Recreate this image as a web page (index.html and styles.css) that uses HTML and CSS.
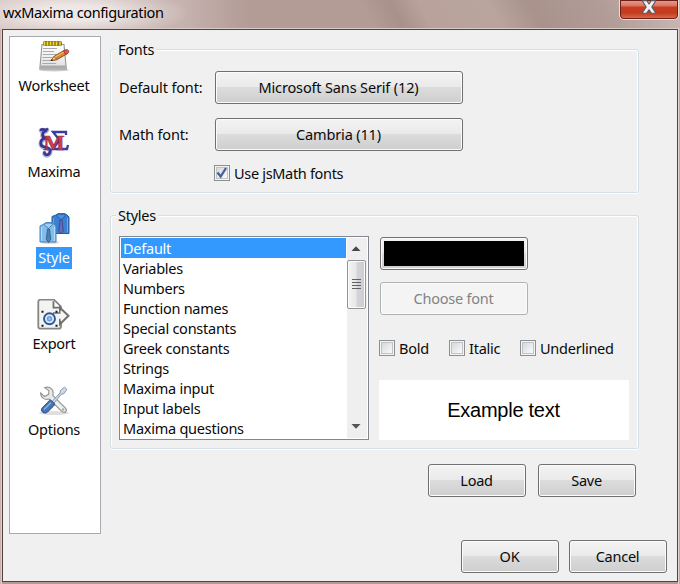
FILE: index.html
```html
<!DOCTYPE html>
<html lang="en">
<head>
<meta charset="utf-8">
<title>wxMaxima configuration</title>
<link rel="stylesheet" href="styles.css">
</head>
<body>
<div class="window">
  <header class="titlebar">
    <span class="title">wxMaxima configuration</span>
    <div class="close">
      <svg width="16" height="15" viewBox="0 0 16 15"><path d="M1.200 .7h4.600L8 4 10.200 .7h4.600L10.800 7 15 13.300h-4.600L8 9.800l-2.400 3.500H1L5.200 7z" fill="#eef0f2" stroke="#535666" stroke-width="1.100" stroke-linejoin="round"/></svg>
    </div>
  </header>
  <main class="client">
    <div class="panes">
      <nav class="sidebar">
        <div class="item">
          <svg width="32" height="32" viewBox="0 0 32 32">
            <defs><linearGradient id="paper" x2="0" y2="1"><stop offset="0" stop-color="#fff"/><stop offset="1" stop-color="#dedede"/></linearGradient></defs>
            <ellipse cx="16" cy="29" rx="15" ry="1.500" fill="#000" opacity=".2"/>
            <path d="M4 3.500h22l2.300 24.500H1.800z" fill="url(#paper)" stroke="#969696" stroke-width="1.100"/>
            <path d="M2.200 24.500h25.500v3H2z" fill="#aaa"/>
            <path d="M5 7.500h14M5 10.500h11M4.800 13.500h14M4.600 16.500h10M4.400 19.500h11M4.200 22.500h14" stroke="#aaa" stroke-width="1"/>
            <rect x="5" y="0" width="19" height="5" rx="1.500" fill="#8a7a12"/>
            <path d="M6.500 .5v4M9.500 .5v4M12.500 .5v4M15.500 .5v4M18.500 .5v4M22 .5v4" stroke="#f2d833" stroke-width="1.500"/>
            <g transform="translate(0 -.5)">
              <path d="M13 20l3.500-4.500 10.500-6 2.500 3.500-10.800 6.300z" fill="#db842b" stroke="#7e4812" stroke-width=".9"/>
              <path d="M17 16.500l9-5" stroke="#f7b965" stroke-width="1.200"/>
              <path d="M13 20l3-4 2.600 2.900z" fill="#f1cf9d" stroke="#7e4812" stroke-width=".6"/>
              <path d="M25.500 10.300l2.500-1.100c2.500-.6 3.700 2.400 1.800 3.600l-2.200 1.200z" fill="#d75d52" stroke="#8c3630" stroke-width=".8"/>
              <path d="M12.700 20.400l1.400-1.800.8 1.300z" fill="#222"/>
            </g>
          </svg>
          <span class="label">Worksheet</span>
        </div>
        <div class="item">
          <svg width="32" height="32" viewBox="0 0 32 32">
            <g fill="none">
              <path d="M3 3.500c2-1.500 3.500 1 6-.5M8 4.500C4 5.500 3 10.500 7.500 12 2 12.500 1 19.500 6 20.500c5 .6 7.500 3 5.500 6.500-2 2.500-5.500 1.500-5-.8" stroke="#b9b8ca" stroke-width="4.600" stroke-linecap="round"/>
              <path d="M3 2.800c2-1.500 3.500 1 6-.5M8 3.800C4 4.800 3 9.800 7.500 11.300 2 11.800 1 18.800 6 19.800c5 .6 7.500 3 5.500 6.500-2 2.500-5.500 1.500-5-.8" stroke="#35359c" stroke-width="2.700" stroke-linecap="round"/>
              <path d="M28 8V5H15l6.500 8-6.500 9h14l1-4" stroke="#3b3ba4" stroke-width="2.300"/>
            </g>
            <text x="5.500" y="22.500" class="mark" textLength="21" lengthAdjust="spacingAndGlyphs">M</text>
          </svg>
          <span class="label">Maxima</span>
        </div>
        <div class="item selected">
          <svg width="32" height="32" viewBox="0 0 32 32">
            <path d="M14 3.500l4-1.500 2-1.300h7L29 2l2 2v16.500H14z" fill="#3b7fd0" stroke="#225ba4"/>
            <path d="M15.500 5v14.500M29.500 5v14.500" stroke="#69a8e8"/>
            <path d="M18.500 2.700l4.500 4 4.500-4-1.800-1.500h-5.400z" fill="#4e90dc" stroke="#1e549a" stroke-width=".8"/>
            <path d="M22 7h2l1.200 11-2.200 2.700-2.200-2.700z" fill="#6b6ab5" stroke="#31458d" stroke-width=".8"/>
            <ellipse cx="12" cy="29.500" rx="9" ry="1.300" fill="#000" opacity=".18"/>
            <path d="M2 13l4-2 2-1.300h6L16 11l2 2v16H2z" fill="#83bdec" stroke="#4382bd"/>
            <path d="M3.500 14v14M16.500 14v14" stroke="#b5dcf8"/>
            <path d="M6 11.500l4.500 4 4.200-4-1.700-1.400H7.800z" fill="#9fceF4" stroke="#3973aa" stroke-width=".8"/>
            <path d="M9.500 16h2l1.200 10.500-2.200 3-2.200-3z" fill="#4d84b5" stroke="#28587f" stroke-width=".8"/>
          </svg>
          <span class="label">Style</span>
        </div>
        <div class="item">
          <svg width="34" height="32" viewBox="0 0 34 32">
            <g transform="translate(0 -.8)">
              <path d="M3.500 1.500H17l7 7v19.800c0 1.500-.7 2.200-2.200 2.200H3.500c-1.500 0-2.200-.7-2.200-2.200V3.700c0-1.500.7-2.200 2.200-2.200z" fill="#f3f3f1" stroke="#858783" stroke-width="1.800"/>
              <path d="M16.500 3v6.500h7" fill="#fff" stroke="#6e706c" stroke-width="1.800"/>
              <path d="M16 15h7V9.500l8.500 8L23 26v-5.500" fill="#f3f3f1" stroke="#6e706c" stroke-width="2"/>
              <path d="M17 15.500h6.500v-3.300l5.500 5.300-5.500 5v-3H17z" fill="#f4f4f2"/>
              <circle cx="12.500" cy="20.500" r="5.500" fill="#dbe9f7" stroke="#2c569c" stroke-width="1.900"/>
              <circle cx="12.500" cy="20.500" r="2.700" fill="#6f9dd2"/><circle cx="12.500" cy="20.500" r="1.200" fill="#a6c7e9"/>
              <path d="M4.500 12.500h2v2h-2zM18.500 12.500h2v2h-2zM4.500 26.500h2v2h-2zM18.500 26.500h2v2h-2z" fill="#151515"/>
            </g>
          </svg>
          <span class="label">Export</span>
        </div>
        <div class="item">
          <svg width="32" height="32" viewBox="0 0 32 32">
            <ellipse cx="16" cy="28" rx="15" ry="2" fill="#000" opacity=".13"/>
            <path d="M6.500 2.700c4-1.500 8.700.5 8.700 5.300 0 1 0 1.700-.4 2.500l12.500 12.400c2.700 2.900-.7 6.200-3.500 3.500L11.200 14c-4.500 1.400-8.500-1-8.600-6l4 3.500 4-2.200.3-3.700z" fill="#e8e9e7" stroke="#92958f" stroke-width="1.100"/>
            <path d="M14 13.500l10.500 11" stroke="#fff"/>
            <circle cx="25" cy="24.500" r="1.200" fill="#aaa"/>
            <path d="M14 16.500l8-8.500.4-2.400 4.100-3.400 2.400 2.200-3.100 4.300-2.400.5-7.400 8.900z" fill="#d1d9e3" stroke="#8697ad"/>
            <path d="M12.500 15l4 3.700c.2 1.600-.8 2.300-1.900 3.200l-5 5.100c-2.800 3-8.200-1-5.400-4.100l5.200-5.200c1-1.200 1.500-2.400 3.100-2.700z" fill="#4674b5" stroke="#234c85"/>
            <path d="M13 17.500l-7 7" stroke="#8eb2df" stroke-width="1.500"/>
          </svg>
          <span class="label">Options</span>
        </div>
      </nav>
      <div class="content">
        <section class="group fonts">
          <h2 class="legend">Fonts</h2>
          <div class="row"><span class="field">Default font:</span><div class="btn wide">Microsoft Sans Serif (12)</div></div>
          <div class="row"><span class="field">Math font:</span><div class="btn wide">Cambria (11)</div></div>
          <div class="check js"><span class="box"><svg width="12" height="12" viewBox="0 0 12 12"><path d="M1.500 5.500l3.200 4L10 1" fill="none" stroke="#4a5f97" stroke-width="2.300"/></svg></span>Use jsMath fonts</div>
        </section>
        <section class="group styles">
          <h2 class="legend">Styles</h2>
          <div class="list">
            <ul class="options">
              <li class="active">Default</li><li>Variables</li><li>Numbers</li><li>Function names</li><li>Special constants</li><li>Greek constants</li><li>Strings</li><li>Maxima input</li><li>Input labels</li><li>Maxima questions</li>
            </ul>
            <div class="scroll">
              <svg class="arrow" width="10" height="5" viewBox="0 0 10 5"><path d="M.5 5L5 .3 9.500 5z" fill="#484848"/></svg>
              <div class="thumb"><i></i><i></i><i></i><i></i></div>
              <svg class="arrow down" width="10" height="5" viewBox="0 0 10 5"><path d="M.5 0L5 4.700 9.500 0z" fill="#555"/></svg>
            </div>
          </div>
          <div class="settings">
            <div class="btn color"><span class="swatch"></span></div>
            <div class="btn disabled">Choose font</div>
            <div class="checks">
              <div class="check bold"><span class="box"></span>Bold</div>
              <div class="check italic"><span class="box"></span>Italic</div>
              <div class="check"><span class="box"></span>Underlined</div>
            </div>
            <div class="example">Example text</div>
          </div>
        </section>
        <div class="actions"><div class="btn">Load</div><div class="btn">Save</div></div>
      </div>
    </div>
    <footer class="footer"><div class="btn">OK</div><div class="btn">Cancel</div></footer>
  </main>
</div>
</body>
</html>
```
FILE: styles.css
```css
* { box-sizing: border-box; }
body { margin: 0; font: 14.5px/20px "Noto Sans", sans-serif; letter-spacing: -0.25px; color: #0a0a0a; }
.window {
  width: 680px; height: 584px; overflow: hidden; padding: 0 2px 2px;
  background: linear-gradient(90deg, #c9b4af 1px, #ddcdca 1px 2px, transparent 2px 678px, #e2d9d6 678px 679px, #bfa8a3 679px),
    linear-gradient(#d5c7c4 0 166px, #b39a95 166px);
}
.titlebar {
  display: flex; justify-content: space-between; height: 29px; margin: 0 -2px; border-bottom: 1px solid #d9cbc7;
  background:
    radial-gradient(ellipse 115px 25px at 75px 13px, rgba(255,255,255,.65) 30%, transparent),
    linear-gradient(60deg, transparent 325px, #a8918a 350px, #b9a29c 375px, #baa49e 435px, #a9928c 470px, #b39d98 535px, #c9b9b5 600px),
    linear-gradient(90deg, #d3c3c0, #c6b3af 180px, #b39b96 250px, #b39d98);
}
.title { margin: 2px 0 0 3px; letter-spacing: -0.39px; color: #000; }
.close {
  display: flex; justify-content: center; width: 60px; height: 20px; margin-right: 1px;
  border: 1px solid #eadcd8; border-top: 0; border-radius: 0 0 5px 5px; box-shadow: inset 0 0 0 1px #6d2018;
  background: linear-gradient(#e7a092, #d9735e 6px, #c93c20 7px, #c43d20 13px, #df6e4c);
}
.client { height: 553px; border: 1px solid #514440; background: #f0f0f0; }
.panes { display: flex; gap: 9px; padding: 6px 0 0 6px; }
.sidebar { display: flex; flex-direction: column; gap: 28px; width: 92px; height: 498px; padding: 2px 2px 0 0; border: 1px solid #a9a9b1; background: #fff; }
.item { display: flex; flex-direction: column; align-items: center; gap: 2px; padding-top: 2px; }
.item svg { display: block; }
.mark { font: bold 22px "Liberation Serif", serif; letter-spacing: 0; fill: #d33c49; stroke: #852b50; stroke-width: .6px; }
.label { height: 22px; padding: 0 2px; line-height: 20px; }
.selected .label { background: #3399ff; color: #fff; }
.content { width: 529px; padding-top: 13px; }
.group { position: relative; border: 1px solid #d5dfe6; border-radius: 3px; box-shadow: inset 0 1px #fff, inset 1px 0 #fff, inset -1px 0 #fff, 0 1px #fff; }
.legend { position: absolute; left: 5px; top: -11px; margin: 0; padding: 0 2px; background: #f0f0f0; font: inherit; }
.fonts { height: 144px; padding: 21px 0 0 8px; }
.row { display: flex; align-items: center; height: 33px; margin-bottom: 14px; }
.field { width: 96px; padding-bottom: 2px; letter-spacing: -0.15px; }
.btn {
  display: flex; align-items: center; justify-content: center; width: 98px; height: 33px; padding: 0 1px 2px 0;
  border: 1px solid #707070; border-radius: 3px; box-shadow: inset 0 0 0 1px #fbfbfb;
  background: linear-gradient(#f3f3f3, #eaeaea 48%, #dcdcdc 50%, #cecece);
}
.wide { width: 248px; letter-spacing: -0.15px; }
.check { display: flex; align-items: center; gap: 4px; height: 16px; }
.js { margin: 1px 0 0 95px; letter-spacing: -0.32px; line-height: 22px; }
.box {
  display: flex; flex: none; align-items: center; justify-content: center; width: 16px; height: 16px;
  border: 1px solid #8e8f8f; box-shadow: inset 0 0 0 1px #f4f4f4, inset 0 0 0 2px #bfc4ca;
  background: linear-gradient(135deg, #cdd1d7, #f8f8f8 80%);
}
.styles { display: flex; gap: 10px; height: 234px; margin-top: 22px; padding: 20px 0 0 8px; }
.list { display: flex; justify-content: space-between; width: 250px; height: 204px; padding: 1px; border: 1px solid #828790; background: #fff; }
.options { width: 225px; margin: 0; padding: 0; list-style: none; }
.options li { height: 20px; padding-left: 2px; line-height: 20px; }
.options .active { background: #3399ff; color: #fff; }
.scroll { display: flex; flex-direction: column; align-items: flex-start; width: 20px; height: 200px; background: #efefef; }
.arrow { margin: 8px 0 0 4px; }
.down { margin: auto 0 9px 4px; }
.thumb {
  display: flex; flex-direction: column; align-items: center; gap: 2px; width: 19px; height: 49px; margin-top: 9px; padding-top: 18px;
  border: 1px solid #949494; border-radius: 2px; box-shadow: inset 0 0 0 1px #fafafa;
  background: linear-gradient(90deg, #f4f4f4, #e8e8ea 48%, #d4d5d9 52%, #cbccd0);
}
.thumb i { width: 9px; height: 1px; background: #606266; }
.settings { width: 250px; padding-top: 1px; }
.settings .btn { width: 148px; margin-left: 1px; }
.settings .color { padding: 0; }
.swatch { width: 140px; height: 25px; background: #000; }
.settings .disabled { margin-top: 12px; border-color: #adb2b5; background: #f4f4f4; color: #838383; }
.checks { display: flex; margin-top: 25px; }
.bold { width: 70px; }
.italic { width: 71px; }
.example { display: flex; align-items: center; justify-content: center; height: 60px; margin-top: 24px; padding-right: 1px; background: #fff; font: 20px "Liberation Sans", sans-serif; letter-spacing: -0.25px; color: #000; }
.actions { display: flex; justify-content: flex-end; gap: 12px; margin-top: 15px; padding-right: 3px; }
.footer { display: flex; justify-content: flex-end; gap: 10px; padding: 6px 10px 0 0; }
```
